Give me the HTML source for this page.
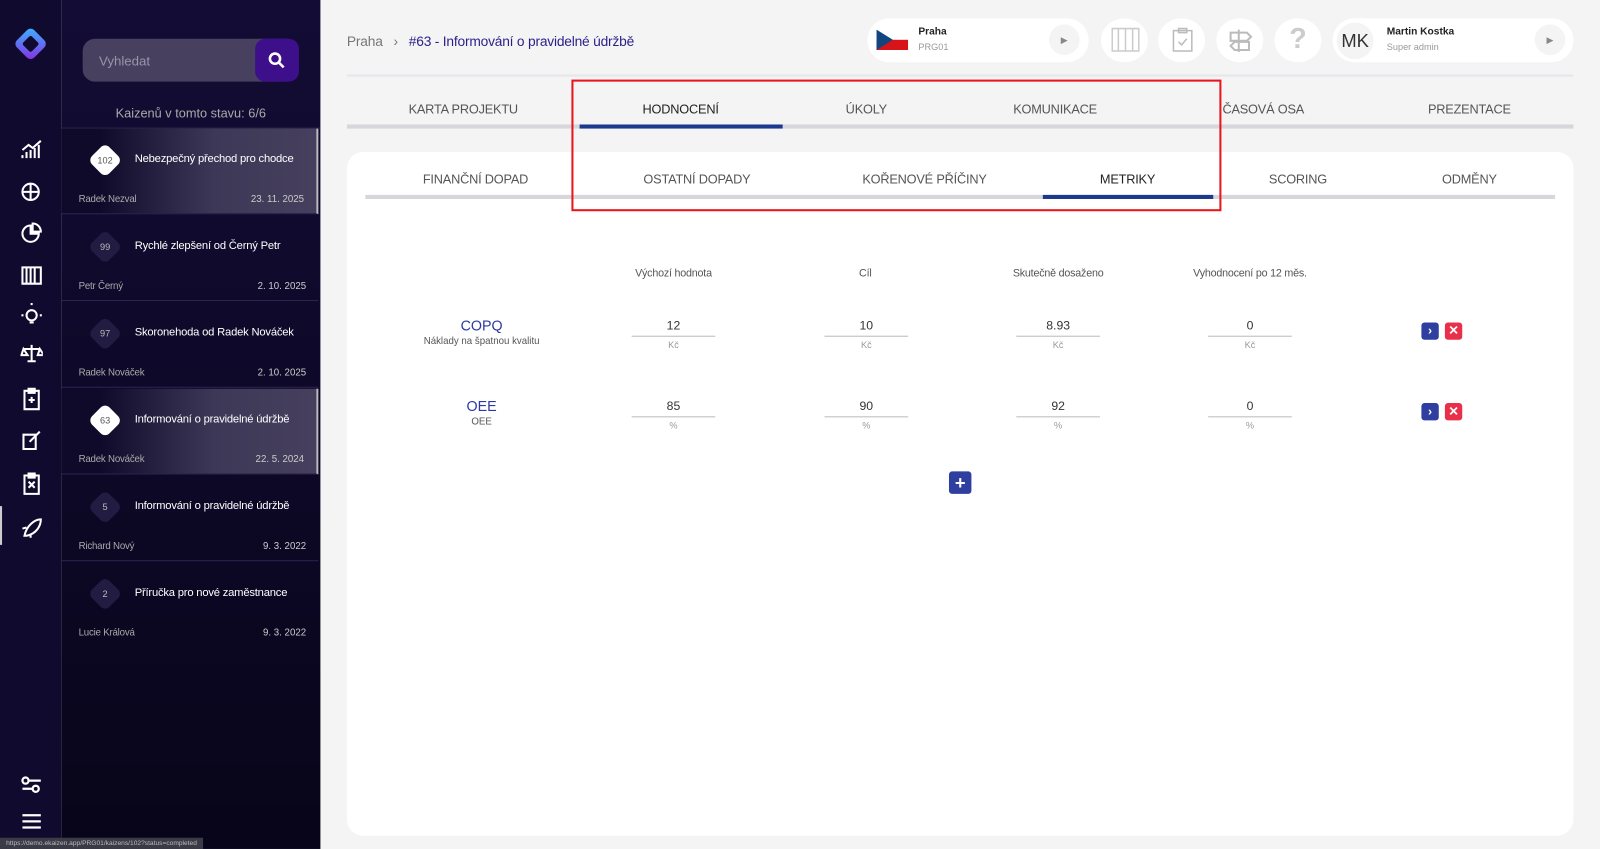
<!DOCTYPE html>
<html><head><meta charset="utf-8"><style>
*{box-sizing:border-box;margin:0;padding:0}
html,body{width:1600px;height:849px;overflow:hidden}
body{font-family:"Liberation Sans",sans-serif;background:#f4f4f4;position:relative}
#w{position:absolute;left:0;top:0;width:1568px;height:832px;transform:scale(1.0204);transform-origin:0 0}
.abs{position:absolute}
.rail{left:0;top:0;width:60px;height:832px;background:#100a2e}
.list{left:60px;top:0;width:254px;height:832px;background:linear-gradient(180deg,#130c35,#08051a)}
.item{position:absolute;left:60px;width:252px;height:84px;border-bottom:1px solid #2b2550}
.item.sel{background:linear-gradient(90deg,#0f0a2a 15%,#3e3858 60%,#46405e);border-right:2px solid #bbb}
.dia{position:absolute;left:31px;top:19px;width:24px;height:24px;transform:rotate(45deg);border-radius:6px;background:#221c42}
.item.sel .dia{background:#fff}
.num{position:absolute;left:22px;top:26px;width:42px;text-align:center;font-size:9px;color:#bbb}
.item.sel .num{color:#555}
.tt{position:absolute;left:72px;top:24px;font-size:11px;letter-spacing:-0.2px;color:#fff;white-space:nowrap}
.au{position:absolute;left:17px;top:64px;font-size:9.5px;color:#aaa;letter-spacing:-0.2px}
.dt{position:absolute;right:12px;top:64px;font-size:9.5px;color:#ccc}
.tab{position:absolute;font-size:12.5px;letter-spacing:-0.2px;color:#555;transform:translateX(-50%);white-space:nowrap}
.pill{position:absolute;top:18px;height:43px;background:#fff;border-radius:22px}
.circ{position:absolute;top:18px;width:46px;height:43px;background:#fff;border-radius:50%}
.hd{position:absolute;top:262px;font-size:10.5px;letter-spacing:-0.2px;color:#555;transform:translateX(-50%);white-space:nowrap}
.val{position:absolute;width:82px;text-align:center;font-size:12px;color:#333;border-bottom:1px solid #bbb;padding-bottom:3px}
.unit{position:absolute;width:82px;text-align:center;font-size:9px;color:#999}
.btn{position:absolute;width:17px;height:17px;border-radius:3px;color:#fff;font-size:12px;text-align:center;line-height:17px;font-weight:bold}
</style></head><body><div id="w">
<div class="abs rail"></div>
<div class="abs list"></div>
<svg class="abs" style="left:12px;top:25px" width="36" height="36" viewBox="0 0 36 36"><defs><linearGradient id="g" x1="0" y1="0" x2="1" y2="1"><stop offset="0" stop-color="#38b6ff"/><stop offset="1" stop-color="#8a2be2"/></linearGradient></defs><rect x="6" y="6" width="24" height="24" rx="5" transform="rotate(45 18 18)" fill="url(#g)"/><rect x="12" y="12" width="12" height="12" rx="2" transform="rotate(45 18 18)" fill="#100a2e"/></svg>
<svg class="abs" style="left:20px;top:137px" width="22" height="400" fill="none" stroke="#fff" stroke-width="2">
<path d="M2 18v-3M6 18v-6M10 18v-8M14 18v-10M18 18v-13M2 10l6-5 4 3 8-7"/>
<circle cx="10" cy="51" r="8"/><path d="M2 51h16M10 43v16"/>
<path d="M10 84a8 8 0 1 0 8 8h-8z M12 82v8h8a8 8 0 0 0-8-8z"/>
<path d="M2 125h18v16H2zM6 125v16M10 125v16M14 125v16"/>
<circle cx="11" cy="172" r="5"/><path d="M9 179h4M11 162v-2M3 172h-2M21 172h-2"/>
<path d="M11 201v16M3 205h16M3 205l-2 6h6zM19 205l-2 6h6z M7 217h8"/>
<path d="M4 246h14v18H4zM8 244h6v4H8zM8 255h6M11 252v6"/>
<path d="M3 289h12v14H3zM9 296l10-10"/>
<path d="M4 329h14v18H4zM8 327h6v4H8zM8 335l6 6M14 335l-6 6"/>
<path d="M4 388c2-10 10-16 16-16c0 6-4 14-14 16zM6 380l-4 1M10 386l0 4"/>
</svg>
<div class="abs" style="left:0;top:496px;width:2px;height:38px;background:#ccc"></div>
<svg class="abs" style="left:20px;top:760px" width="22" height="58" fill="none" stroke="#fff" stroke-width="2.2">
<circle cx="5" cy="5" r="3"/><path d="M8 5h12M2 13h10"/><circle cx="15" cy="13" r="3"/>
<path d="M2 39h18M2 45h18M2 51h18"/></svg>
<div class="abs" style="left:0;top:821px;width:199px;height:11px;background:#3b3b48;font-size:6.5px;color:#bbb;padding-left:6px;line-height:11px;white-space:nowrap;overflow:hidden">https://demo.ekaizen.app/PRG01/kaizens/102?status=completed</div>
<div class="abs" style="left:81px;top:38px;width:212px;height:42px;background:#48405f;border-radius:12px"></div>
<div class="abs" style="left:97px;top:52px;font-size:13px;color:#9a94a8">Vyhledat</div>
<div class="abs" style="left:250px;top:38px;width:43px;height:42px;background:#3d0f8a;border-radius:10px"></div>
<svg class="abs" style="left:263px;top:51px" width="16" height="16" fill="none" stroke="#fff" stroke-width="2.5"><circle cx="6.5" cy="6.5" r="5"/><path d="M10 10l5 5"/></svg>
<div class="abs" style="left:60px;top:104px;width:254px;text-align:center;font-size:12.5px;color:#aaa">Kaizenů v tomto stavu: 6/6</div>
<div class="abs" style="left:60px;top:125px;width:254px;height:1px;background:#2b2550"></div>
<div class="item sel" style="top:126px"><div class="dia"></div><div class="num">102</div><div class="tt">Nebezpečný přechod pro chodce</div><div class="au">Radek Nezval</div><div class="dt">23. 11. 2025</div></div>
<div class="item" style="top:211px"><div class="dia"></div><div class="num">99</div><div class="tt">Rychlé zlepšení od Černý Petr</div><div class="au">Petr Černý</div><div class="dt">2. 10. 2025</div></div>
<div class="item" style="top:296px"><div class="dia"></div><div class="num">97</div><div class="tt">Skoronehoda od Radek Nováček</div><div class="au">Radek Nováček</div><div class="dt">2. 10. 2025</div></div>
<div class="item sel" style="top:381px"><div class="dia"></div><div class="num">63</div><div class="tt">Informování o pravidelné údržbě</div><div class="au">Radek Nováček</div><div class="dt">22. 5. 2024</div></div>
<div class="item" style="top:466px"><div class="dia"></div><div class="num">5</div><div class="tt">Informování o pravidelné údržbě</div><div class="au">Richard Nový</div><div class="dt">9. 3. 2022</div></div>
<div class="item" style="top:551px;border-bottom:none"><div class="dia"></div><div class="num">2</div><div class="tt">Příručka pro nové zaměstnance</div><div class="au">Lucie Králová</div><div class="dt">9. 3. 2022</div></div>
<div class="abs" style="left:340px;top:33px;font-size:13.5px;letter-spacing:-0.2px;color:#777;white-space:nowrap">Praha &nbsp;&nbsp;›&nbsp;&nbsp; <span style="color:#2a1f8a">#63 - Informování o pravidelné údržbě</span></div>
<div class="pill" style="left:850px;width:217px"></div>
<div class="abs" style="left:859px;top:29px;width:31px;height:20px;background:#fff;overflow:hidden"><div style="height:10px;background:#fff"></div><div style="height:10px;background:#d7141a"></div><div style="position:absolute;left:0;top:0;border-left:16px solid #11457e;border-top:10px solid transparent;border-bottom:10px solid transparent"></div></div>
<div class="abs" style="left:900px;top:26px;font-size:10px;color:#222;font-weight:bold">Praha</div>
<div class="abs" style="left:900px;top:41px;font-size:9px;color:#999">PRG01</div>
<div class="abs" style="left:1028px;top:24px;width:30px;height:30px;border-radius:50%;background:#f4f4f4;color:#888;font-size:9px;text-align:center;line-height:30px">▶</div>
<div class="circ" style="left:1079px"></div><div class="circ" style="left:1135px"></div><div class="circ" style="left:1192px"></div><div class="circ" style="left:1249px"></div>
<svg class="abs" style="left:1089px;top:27px" width="28" height="24" fill="none" stroke="#ccc" stroke-width="1.5"><path d="M1 1h26v22H1zM7 1v22M14 1v22M21 1v22"/></svg>
<svg class="abs" style="left:1148px;top:26px" width="22" height="26" fill="none" stroke="#bbb" stroke-width="1.5"><path d="M2 4h18v20H2zM7 2h8v4H7zM7 15l3 3 5-6"/></svg>
<svg class="abs" style="left:1202px;top:27px" width="28" height="26" fill="none" stroke="#bbb" stroke-width="2"><path d="M12 2v22M4 5h16l4 4-4 4H4zM22 14H8l-4 4 4 4h14z"/></svg>
<div class="abs" style="left:1249px;top:22px;width:46px;text-align:center;font-size:28px;color:#ccc;font-weight:bold">?</div>
<div class="pill" style="left:1306px;width:236px"></div>
<div class="abs" style="left:1310px;top:22px;width:36px;height:36px;border-radius:50%;background:#f4f4f4;font-size:18px;color:#333;text-align:center;line-height:36px">MK</div>
<div class="abs" style="left:1359px;top:26px;font-size:10px;color:#222;font-weight:bold">Martin Kostka</div>
<div class="abs" style="left:1359px;top:41px;font-size:9px;color:#999">Super admin</div>
<div class="abs" style="left:1504px;top:24px;width:30px;height:30px;border-radius:50%;background:#f4f4f4;color:#888;font-size:9px;text-align:center;line-height:30px">▶</div>
<div class="abs" style="left:340px;top:73px;width:1202px;height:2px;background:#e6e6ec"></div>
<div class="tab" style="left:454px;top:100px">KARTA PROJEKTU</div>
<div class="tab" style="left:667px;top:100px;color:#222">HODNOCENÍ</div>
<div class="tab" style="left:849px;top:100px">ÚKOLY</div>
<div class="tab" style="left:1034px;top:100px">KOMUNIKACE</div>
<div class="tab" style="left:1238px;top:100px">ČASOVÁ OSA</div>
<div class="tab" style="left:1440px;top:100px">PREZENTACE</div>
<div class="abs" style="left:340px;top:122px;width:1202px;height:4px;background:#d6d6dc"></div>
<div class="abs" style="left:568px;top:122px;width:199px;height:4px;background:#1b3a8f"></div>
<div class="abs" style="left:340px;top:149px;width:1202px;height:670px;background:#fff;border-radius:16px"></div>
<div class="tab" style="left:466px;top:169px">FINANČNÍ DOPAD</div>
<div class="tab" style="left:683px;top:169px">OSTATNÍ DOPADY</div>
<div class="tab" style="left:906px;top:169px">KOŘENOVÉ PŘÍČINY</div>
<div class="tab" style="left:1105px;top:169px;color:#222">METRIKY</div>
<div class="tab" style="left:1272px;top:169px">SCORING</div>
<div class="tab" style="left:1440px;top:169px">ODMĚNY</div>
<div class="abs" style="left:358px;top:191px;width:1166px;height:4px;background:#d6d6dc"></div>
<div class="abs" style="left:1022px;top:191px;width:167px;height:4px;background:#1b3a8f"></div>
<div class="abs" style="left:560px;top:78px;width:637px;height:129px;border:2px solid #e8151b"></div>
<div class="hd" style="left:660px">Výchozí hodnota</div>
<div class="hd" style="left:848px">Cíl</div>
<div class="hd" style="left:1037px">Skutečně dosaženo</div>
<div class="hd" style="left:1225px">Vyhodnocení po 12 měs.</div>
<div class="abs" style="left:372px;top:311px;width:200px;text-align:center;font-size:14px;color:#2a3aa0">COPQ</div>
<div class="abs" style="left:372px;top:329px;width:200px;text-align:center;font-size:9.5px;color:#555">Náklady na špatnou kvalitu</div>
<div class="abs" style="left:372px;top:390px;width:200px;text-align:center;font-size:14px;color:#2a3aa0">OEE</div>
<div class="abs" style="left:372px;top:408px;width:200px;text-align:center;font-size:9.5px;color:#555">OEE</div>
<div class="val" style="left:619px;top:312px">12</div><div class="unit" style="left:619px;top:333px">Kč</div>
<div class="val" style="left:808px;top:312px">10</div><div class="unit" style="left:808px;top:333px">Kč</div>
<div class="val" style="left:996px;top:312px">8.93</div><div class="unit" style="left:996px;top:333px">Kč</div>
<div class="val" style="left:1184px;top:312px">0</div><div class="unit" style="left:1184px;top:333px">Kč</div>
<div class="val" style="left:619px;top:391px">85</div><div class="unit" style="left:619px;top:412px">%</div>
<div class="val" style="left:808px;top:391px">90</div><div class="unit" style="left:808px;top:412px">%</div>
<div class="val" style="left:996px;top:391px">92</div><div class="unit" style="left:996px;top:412px">%</div>
<div class="val" style="left:1184px;top:391px">0</div><div class="unit" style="left:1184px;top:412px">%</div>
<div class="btn" style="left:1393px;top:316px;background:#2f3fa0">›</div>
<div class="btn" style="left:1416px;top:316px;background:#e8304a">✕</div>
<div class="btn" style="left:1393px;top:395px;background:#2f3fa0">›</div>
<div class="btn" style="left:1416px;top:395px;background:#e8304a">✕</div>
<div class="btn" style="left:930px;top:462px;width:22px;height:22px;line-height:22px;font-size:18px;background:#2f3fa0">+</div>
</div></body></html>
